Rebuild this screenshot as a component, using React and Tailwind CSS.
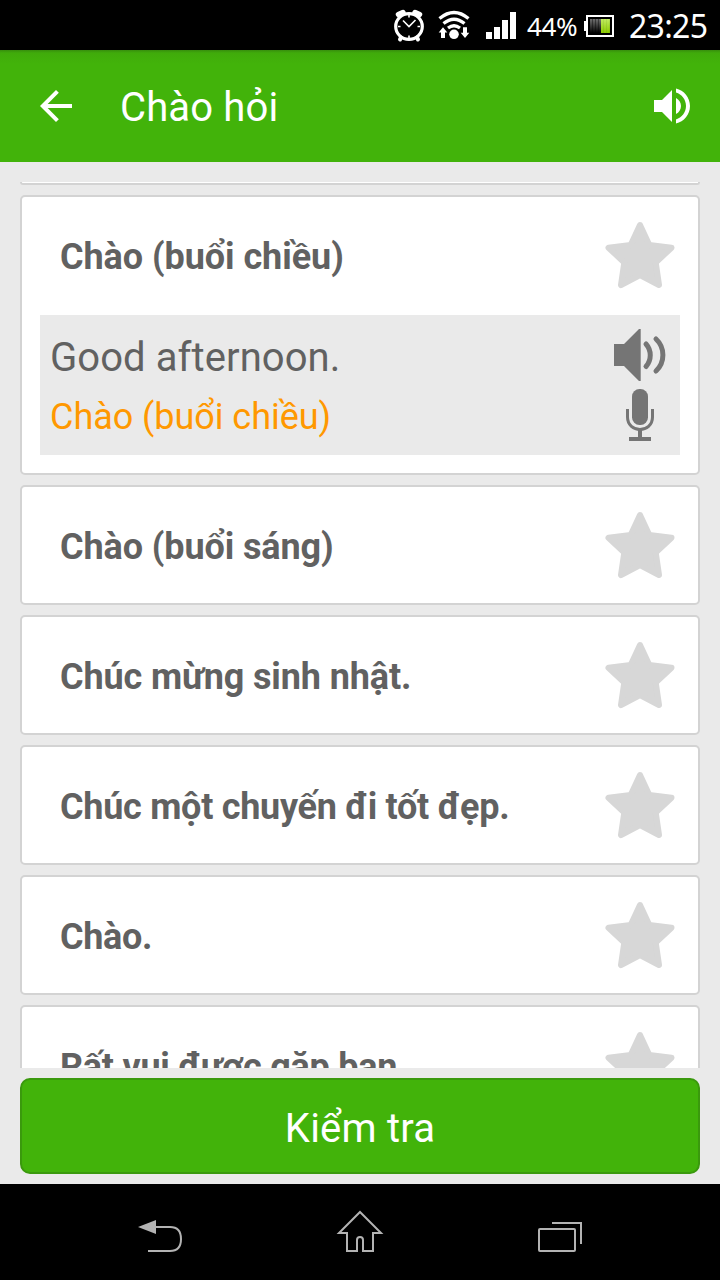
import React, { useState } from 'react';

const phrases = [
    { id: 1, title: "Chào (buổi chiều)", text: "Good afternoon.", tracking: "tracking-[-0.06px]" },
    { id: 2, title: "Chào (buổi sáng)", text: "Good morning.", tracking: "tracking-[-0.1px]" },
    { id: 3, title: "Chúc mừng sinh nhật.", text: "Happy birthday.", tracking: "tracking-[-0.13px]" },
    { id: 4, title: "Chúc một chuyến đi tốt đẹp.", text: "Have a good trip.", tracking: "tracking-[-0.28px]" },
    { id: 5, title: "Chào.", text: "Hello.", tracking: "tracking-[-0.3px]" },
    { id: 6, title: "Rất vui được gặp bạn.", text: "Nice to meet you.", tracking: "tracking-[-0.25px]" },
];

const StatusBar = () => (
    <div className="h-[50px] shrink-0 bg-black flex items-center text-white font-['Noto_Sans',sans-serif]">
        <svg className="ml-[390px] shrink-0" width="130" height="50" viewBox="390 0 130 50" fill="none" stroke="#fff">
            {/* Alarm clock */}
            <ellipse cx="409" cy="26.500" rx="13.300" ry="12.800" strokeWidth="3.200" />
            <path d="M398.500 14.500L403 12.500M419.500 14.500L415 12.500" strokeWidth="5.500" strokeLinecap="round" />
            <path d="M401 37.500L400 39.500M417 37.500L418 39.500" strokeWidth="4" strokeLinecap="round" />
            <path d="M403 20.500L409 26.500L415.500 20" strokeWidth="1.600" />
            <path d="M409 15v2.500M409 35.500v2.500M398 26.500h2.500M417.500 26.500h2.500" strokeWidth="1.600" />
            {/* Wifi */}
            <path d="M439.500 18.500Q454 6.500 468.500 18.500M443.500 23.500Q454 15 464.500 23.500M448 28Q454 23.500 460 28" strokeWidth="3.300" />
            <circle cx="454" cy="34.300" r="4.800" fill="#fff" stroke="none" />
            <path d="M443 27.300l4.300 5.200h-2.300v5.500h-4v-5.500h-2.300zM465 38l-4.300-5.200h2.300v-5.500h4v5.500h2.300z" fill="#fff" stroke="none" />
            {/* Signal */}
            <path d="M486 32h6v7h-6zM494 27h6v12h-6zM502 20h6v19h-6zM510 12h6v27h-6z" fill="#fff" stroke="none" />
        </svg>
        <span className="w-[49px] ml-[7px] pt-px text-[26px] leading-none tracking-[-0.4px] whitespace-nowrap">44%</span>
        <div className="ml-[8px] pt-[2px] flex items-center">
            <div className="w-[2px] h-[10px] bg-white" />
            <div className="w-[28px] h-[22px] border-2 border-white p-[2px] flex">
                <div className="w-[11px] bg-[repeating-linear-gradient(90deg,transparent_0px,transparent_2px,#0006_2px,#0006_3px),linear-gradient(#707070,#000)]" />
                <div className="w-[9px] bg-[repeating-linear-gradient(90deg,transparent_0px,transparent_2px,#0001_2px,#0001_3px),linear-gradient(#c1ec60,#8ccb00)]" />
            </div>
        </div>
        <span className="ml-[15px] pt-px text-[32px] leading-none tracking-[-0.7px] whitespace-nowrap">23:25</span>
    </div>
)

const Header = () => (
    <div className="h-[112px] shrink-0 bg-[linear-gradient(to_bottom,#378f0d_0px,#40ab0b_3px,#42b30a_14px)] flex items-center px-8 text-white">
        <svg className="w-12 h-12 mr-10" viewBox="0 0 24 24" fill="currentColor">
            <path d="M20 11H7.830l5.590-5.590L12 4l-8 8 8 8 1.410-1.410L7.830 13H20v-2z" />
        </svg>
        <h1 className="text-[40px] leading-[48px] pt-[4px] tracking-[0.15px]">Chào hỏi</h1>
        <svg className="w-12 h-12 ml-auto -mr-2" viewBox="0 0 24 24" fill="currentColor">
            <path d="M3 9v6h4l5 5V4L7 9H3zm13.500 3c0-1.770-1.020-3.290-2.500-4.030v8.050c1.480-.730 2.500-2.250 2.500-4.020zM14 3.230v2.060c2.890.860 5 3.540 5 6.710s-2.110 5.850-5 6.710v2.060c4.010-.910 7-4.490 7-8.770s-2.990-7.860-7-8.770z" />
        </svg>
    </div>
)

const Star = () => (
    <svg className="w-20 h-20" viewBox="600 215 80 80" fill="#d7d7d7" stroke="#d7d7d7" strokeWidth="6" strokeLinejoin="round">
        <path d="M640 225L649.300 245L671.500 247.700L655.700 262.500L659 285L640 275L621 285L624.300 262.500L608.500 247.700L630.700 245Z" />
    </svg>
)

const Speaker = () => (
    <svg width="60" height="60" viewBox="610 325 60 60" fill="none" stroke="#757575" strokeWidth="5" strokeLinecap="round">
        <path d="M614 344h10l15-15h1.700v52H639l-15-15h-10z" fill="#757575" stroke="none" />
        <path d="M646 344a17 17 0 0 1 0 22.500M656 339a22 22 0 0 1 0 32" />
    </svg>
)

const Mic = () => (
    <svg width="60" height="60" viewBox="610 385 60 60" fill="none" stroke="#757575">
        <rect x="632" y="389" width="16" height="36" rx="7.500" fill="#757575" stroke="none" />
        <path d="M627.500 409v8c0 16.500 25 16.500 25 0v-8" strokeWidth="3" />
        <path d="M640 430v8M629 439h22" strokeWidth="4" />
    </svg>
)

const PhraseCard = ({ phrase, open, onToggle }) => (
    <div className="shrink-0 bg-white border-2 border-[#d3d3d3] rounded-[5px] px-[18px]">
        <div className="h-[116px] flex items-center justify-between pl-5 cursor-pointer" onClick={onToggle}>
            <span className={`text-[36px] leading-[42px] font-bold text-[#616161] whitespace-nowrap pt-[4px] ${phrase.tracking}`}>{phrase.title}</span>
            <Star />
        </div>
        {open &&
            <div className="h-[140px] mt-[2px] mb-[18px] bg-[#eaeaea] flex justify-between px-[10px] py-[10px]">
                <div>
                    <p className="h-[60px] text-[40px] leading-[66px] tracking-[0.08px] text-[#616161]">{phrase.text}</p>
                    <p className="h-[60px] text-[36px] leading-[65px] tracking-[-0.05px] text-[#ff9800]">{phrase.title}</p>
                </div>
                <div className="flex flex-col">
                    <Speaker />
                    <Mic />
                </div>
            </div>
        }
    </div>
)

const NavBar = () => (
    <div className="h-24 shrink-0 bg-black">
        <svg width="720" height="96" viewBox="0 1184 720 96" fill="none" stroke="#b3b3b3" strokeWidth="2">
            <path d="M138 1227l18-7v14z" fill="#b3b3b3" stroke="none" />
            <path d="M155 1227h15q11 0 11 12t-11 12h-22" />
            <path d="M360 1212l21 21h-8v18h-10v-11q0-3-3-3t-3 3v11h-10v-18h-8z" />
            <rect x="539" y="1229" width="36" height="22" rx="1" />
            <path d="M552 1223h29v21" />
        </svg>
    </div>
)

const App = () => {
    const [openId, setOpenId] = useState(1);

    return (
        <div className="w-[720px] h-[1280px] flex flex-col overflow-hidden bg-[#eaeaea] font-[Roboto,sans-serif]">
            <StatusBar />
            <Header />
            <div className="h-[886px] shrink-0 mt-5 mx-5 overflow-hidden flex flex-col gap-[10px]">
                {/* Tail of the card scrolled off the top */}
                <div className="h-[3px] shrink-0 bg-white border-b-2 border-x-2 border-[#d3d3d3] rounded-b-[5px]" />
                {phrases.map((phrase) => (
                    <PhraseCard
                        key={phrase.id}
                        phrase={phrase}
                        open={openId === phrase.id}
                        onToggle={() => setOpenId(openId === phrase.id ? null : phrase.id)}
                    />
                ))}
            </div>
            <button className="h-24 shrink-0 mx-5 my-[10px] rounded-[10px] border-2 border-[#3a990d] bg-[#42b30a] text-white text-[40px] leading-[48px] pt-[6px] tracking-[0.2px]">
                Kiểm tra
            </button>
            <NavBar />
        </div>
    );
};

export default App;
